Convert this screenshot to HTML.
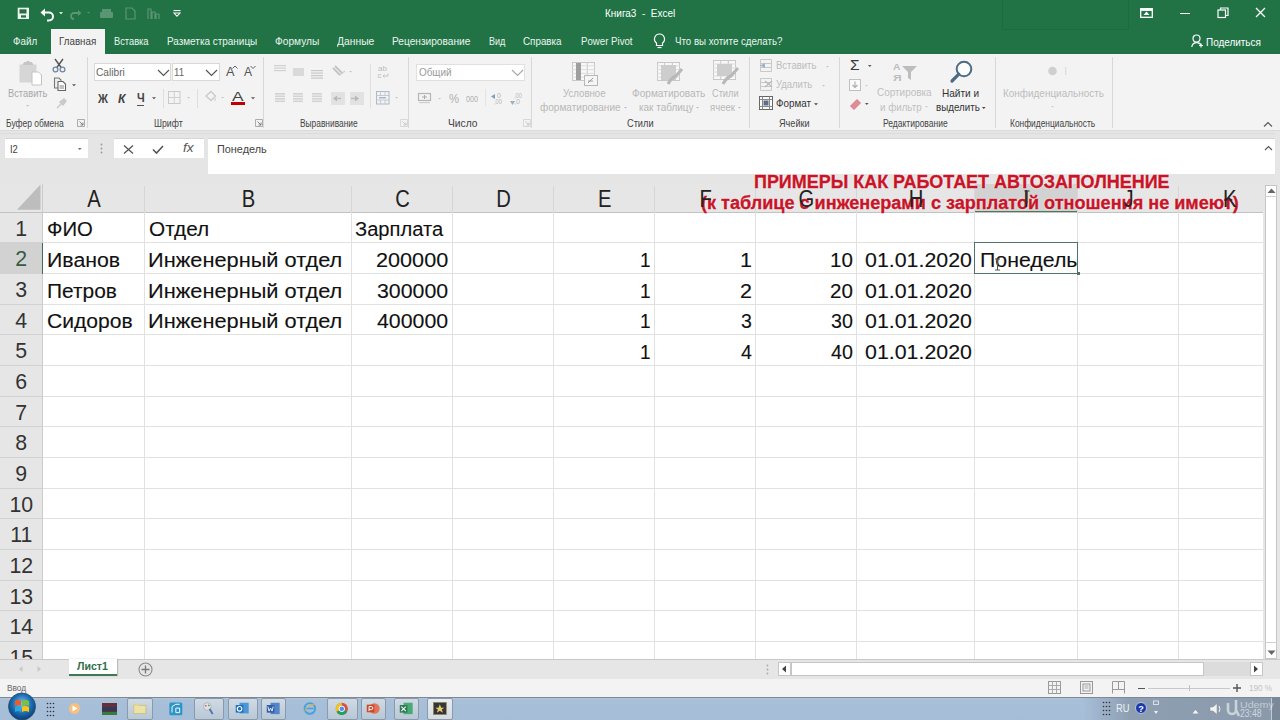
<!DOCTYPE html>
<html><head><meta charset="utf-8"><style>
html,body{margin:0;padding:0}
body{width:1280px;height:720px;overflow:hidden;position:relative;font-family:"Liberation Sans", sans-serif;background:#fff}
.t{position:absolute;white-space:nowrap;line-height:1.117;transform-origin:0 0}
svg{overflow:visible}
</style></head><body>
<div style="position:absolute;left:0.00px;top:0.00px;width:1280.00px;height:54.00px;background:#217346"></div><div style="position:absolute;left:1002.00px;top:-1.00px;width:127.00px;height:31.00px;border:1px solid #1c6a3f;box-sizing:border-box"></div><div style="position:absolute;left:51.00px;top:29.00px;width:53.50px;height:25.00px;background:#f3f3f3"></div><div class="t" style="left:13.00px;top:35.09px;font-size:11.5px;color:#eaf5ee;font-weight:normal;transform:scaleX(0.8526);">Файл</div><div class="t" style="left:59.00px;top:35.09px;font-size:11.5px;color:#444;font-weight:normal;transform:scaleX(0.8497);">Главная</div><div class="t" style="left:114.00px;top:35.09px;font-size:11.5px;color:#eaf5ee;font-weight:normal;transform:scaleX(0.8074);">Вставка</div><div class="t" style="left:167.00px;top:35.09px;font-size:11.5px;color:#eaf5ee;font-weight:normal;transform:scaleX(0.8649);">Разметка страницы</div><div class="t" style="left:275.00px;top:35.09px;font-size:11.5px;color:#eaf5ee;font-weight:normal;transform:scaleX(0.8839);">Формулы</div><div class="t" style="left:337.00px;top:35.09px;font-size:11.5px;color:#eaf5ee;font-weight:normal;transform:scaleX(0.8991);">Данные</div><div class="t" style="left:392.00px;top:35.09px;font-size:11.5px;color:#eaf5ee;font-weight:normal;transform:scaleX(0.8823);">Рецензирование</div><div class="t" style="left:489.00px;top:35.09px;font-size:11.5px;color:#eaf5ee;font-weight:normal;transform:scaleX(0.7869);">Вид</div><div class="t" style="left:523.40px;top:35.09px;font-size:11.5px;color:#eaf5ee;font-weight:normal;transform:scaleX(0.8553);">Справка</div><div class="t" style="left:580.60px;top:35.09px;font-size:11.5px;color:#eaf5ee;font-weight:normal;transform:scaleX(0.8397);">Power Pivot</div><div class="t" style="left:675.00px;top:35.09px;font-size:11.5px;color:#eaf5ee;font-weight:normal;transform:scaleX(0.8443);">Что вы хотите сделать?</div><div class="t" style="left:604.70px;top:6.77px;font-size:11.3px;color:#fff;font-weight:normal;transform:scaleX(0.8823);">Книга3&nbsp; -&nbsp; Excel</div><div class="t" style="left:1206.00px;top:36.09px;font-size:11.5px;color:#fff;font-weight:normal;transform:scaleX(0.8629);">Поделиться</div><svg style="position:absolute;left:17px;top:7px;" width="13" height="13" viewBox="0 0 13 13"><rect x="0.7" y="0.7" width="11.3" height="11.3" fill="#eaf5ee"/><rect x="2.5" y="2.3" width="7" height="4.2" fill="#2f6a47"/><rect x="4" y="8.3" width="5" height="2.3" fill="#2f6a47"/></svg><svg style="position:absolute;left:40px;top:7px;" width="16" height="14" viewBox="0 0 16 14"><path d="M2.5 5.5 H9 a4 4 0 0 1 0 8 H7" fill="none" stroke="#ffffff" stroke-width="2"/><polygon points="0.5,5.5 5,1.5 5,9.5" fill="#ffffff"/></svg><svg style="position:absolute;left:57.5px;top:11px;" width="6" height="5" viewBox="0 0 6 5"><polygon points="1,1.20 5.00,1.20 3.00,3.20" fill="#ffffff"/></svg><svg style="position:absolute;left:70px;top:8px;" width="12" height="12" viewBox="0 0 12 12"><path d="M10 5 H4 a3 3 0 0 0 0 6" fill="none" stroke="#5a9673" stroke-width="1.8"/><polygon points="11.5,5 8,2 8,8" fill="#5a9673"/></svg><svg style="position:absolute;left:86.4px;top:11.4px;" width="5.2" height="4.2" viewBox="0 0 5.2 4.2"><polygon points="1,0.96 4.20,0.96 2.60,2.56" fill="#5a9673"/></svg><svg style="position:absolute;left:100px;top:9px;" width="13" height="10" viewBox="0 0 13 10"><rect x="0" y="3" width="13" height="6" rx="1" fill="#5a9673"/><rect x="2" y="0" width="9" height="4" fill="#5a9673"/></svg><svg style="position:absolute;left:125px;top:7px;" width="11" height="13" viewBox="0 0 11 13"><path d="M1 1 H7 L10 4 V12 H1 Z" fill="none" stroke="#5a9673" stroke-width="1.2"/></svg><svg style="position:absolute;left:147px;top:7px;" width="13" height="13" viewBox="0 0 13 13"><path d="M1 12 V2 H4 V12 M5 12 V5 H8 V12 M9 12 V7 H12 V12" fill="none" stroke="#5a9673" stroke-width="1.2"/></svg><svg style="position:absolute;left:173px;top:10px;" width="8" height="7" viewBox="0 0 8 7"><rect x="0.5" y="0" width="7" height="1.1" fill="#ffffff"/><polygon points="1,3 7,3 4,6.3" fill="none" stroke="#ffffff" stroke-width="1.1"/></svg><svg style="position:absolute;left:1140px;top:8px;" width="13" height="10" viewBox="0 0 13 10"><rect x="0.7" y="0.7" width="11.6" height="8.6" fill="none" stroke="#ffffff" stroke-width="1.3"/><rect x="0.7" y="0.7" width="11.6" height="2.2" fill="#ffffff"/><polygon points="6.5,3.5 3.5,7 9.5,7" fill="#ffffff"/></svg><div style="position:absolute;left:1180.00px;top:13.00px;width:10.00px;height:1.30px;background:#ffffff"></div><svg style="position:absolute;left:1217px;top:7px;" width="12" height="12" viewBox="0 0 12 12"><rect x="1" y="3" width="7.5" height="7.5" fill="none" stroke="#ffffff" stroke-width="1.2"/><path d="M3.5 3 V1 H11 V8.5 H8.5" fill="none" stroke="#ffffff" stroke-width="1.2"/></svg><svg style="position:absolute;left:1255px;top:7px;" width="11" height="11" viewBox="0 0 11 11"><path d="M1 1 L10 10 M10 1 L1 10" stroke="#ffffff" stroke-width="1.3"/></svg><svg style="position:absolute;left:1191px;top:34px;" width="12" height="14" viewBox="0 0 12 14"><circle cx="5.5" cy="4.5" r="3.5" fill="none" stroke="#ffffff" stroke-width="1.2"/><path d="M0.8 13 a5 5 0 0 1 9.5 -1.5" fill="none" stroke="#ffffff" stroke-width="1.2"/><path d="M8 11.5 H12 M10 9.5 V13.5" stroke="#ffffff" stroke-width="1.1"/></svg><svg style="position:absolute;left:653px;top:33px;" width="13" height="16" viewBox="0 0 13 16"><path d="M6.5 1 a5 5 0 0 1 3 9 v2.5 h-6 v-2.5 a5 5 0 0 1 3 -9 z" fill="none" stroke="#ffffff" stroke-width="1.2"/><path d="M4.5 14.5 h4" stroke="#ffffff" stroke-width="1.2"/></svg><div style="position:absolute;left:0.00px;top:54.00px;width:1280.00px;height:76.00px;background:#f3f3f3"></div><div style="position:absolute;left:0.00px;top:130.00px;width:1280.00px;height:1.00px;background:#dadada"></div><div style="position:absolute;left:86.50px;top:57.00px;width:1.00px;height:71.00px;background:#d8d8d8"></div><div style="position:absolute;left:263.00px;top:57.00px;width:1.00px;height:71.00px;background:#d8d8d8"></div><div style="position:absolute;left:408.00px;top:57.00px;width:1.00px;height:71.00px;background:#d8d8d8"></div><div style="position:absolute;left:531.00px;top:57.00px;width:1.00px;height:71.00px;background:#d8d8d8"></div><div style="position:absolute;left:749.00px;top:57.00px;width:1.00px;height:71.00px;background:#d8d8d8"></div><div style="position:absolute;left:839.00px;top:57.00px;width:1.00px;height:71.00px;background:#d8d8d8"></div><div style="position:absolute;left:995.00px;top:57.00px;width:1.00px;height:71.00px;background:#d8d8d8"></div><div style="position:absolute;left:1112.00px;top:57.00px;width:1.00px;height:71.00px;background:#d8d8d8"></div><div class="t" style="left:6.00px;top:117.95px;font-size:10px;color:#444;font-weight:normal;transform:scaleX(0.8481);">Буфер обмена</div><div class="t" style="left:154.00px;top:117.95px;font-size:10px;color:#444;font-weight:normal;transform:scaleX(0.8703);">Шрифт</div><div class="t" style="left:300.00px;top:117.95px;font-size:10px;color:#444;font-weight:normal;transform:scaleX(0.8373);">Выравнивание</div><div class="t" style="left:448.00px;top:117.95px;font-size:10px;color:#444;font-weight:normal;transform:scaleX(1.0275);">Число</div><div class="t" style="left:627.00px;top:117.95px;font-size:10px;color:#444;font-weight:normal;transform:scaleX(0.9212);">Стили</div><div class="t" style="left:779.00px;top:117.95px;font-size:10px;color:#444;font-weight:normal;transform:scaleX(0.9104);">Ячейки</div><div class="t" style="left:883.00px;top:117.95px;font-size:10px;color:#444;font-weight:normal;transform:scaleX(0.8484);">Редактирование</div><div class="t" style="left:1010.00px;top:117.95px;font-size:10px;color:#444;font-weight:normal;transform:scaleX(0.8397);">Конфиденциальность</div><svg style="position:absolute;left:77px;top:119px;" width="8" height="8" viewBox="0 0 8 8"><path d="M0.5 0.5 H7.5 V7.5 H0.5 Z" fill="none" stroke="#999" stroke-width="0.8"/><path d="M2.5 2.5 L6 6 M6 3.5 V6 H3.5" fill="none" stroke="#777" stroke-width="0.9"/></svg><svg style="position:absolute;left:255px;top:119px;" width="8" height="8" viewBox="0 0 8 8"><path d="M0.5 0.5 H7.5 V7.5 H0.5 Z" fill="none" stroke="#999" stroke-width="0.8"/><path d="M2.5 2.5 L6 6 M6 3.5 V6 H3.5" fill="none" stroke="#777" stroke-width="0.9"/></svg><svg style="position:absolute;left:400px;top:119px;" width="8" height="8" viewBox="0 0 8 8"><path d="M0.5 0.5 H7.5 V7.5 H0.5 Z" fill="none" stroke="#d0d0d0" stroke-width="0.8"/><path d="M2.5 2.5 L6 6 M6 3.5 V6 H3.5" fill="none" stroke="#c4c4c4" stroke-width="0.9"/></svg><svg style="position:absolute;left:523px;top:119px;" width="8" height="8" viewBox="0 0 8 8"><path d="M0.5 0.5 H7.5 V7.5 H0.5 Z" fill="none" stroke="#d0d0d0" stroke-width="0.8"/><path d="M2.5 2.5 L6 6 M6 3.5 V6 H3.5" fill="none" stroke="#c4c4c4" stroke-width="0.9"/></svg><svg style="position:absolute;left:1263px;top:121px;" width="10" height="6" viewBox="0 0 10 6"><path d="M1 5.5 L5 1.5 L9 5.5" fill="none" stroke="#555" stroke-width="1.1"/></svg><svg style="position:absolute;left:18px;top:59px;" width="26" height="28" viewBox="0 0 26 28"><rect x="1.5" y="5.5" width="17" height="18" fill="#d6d6d6"/><path d="M4.5 6 L6 3 H8 Q10 0.5 12 3 H14 L15.5 6 Z" fill="#c6c6c6"/><path d="M14 13 H20.5 L23.5 16 V26 H14 Z" fill="#fff" stroke="#c4c4c4" stroke-width="1"/></svg><div class="t" style="left:8.30px;top:87.34px;font-size:11px;color:#a8a8a8;font-weight:normal;transform:scaleX(0.8466);">Вставить</div><svg style="position:absolute;left:25.4px;top:104.4px;" width="5.2" height="4.2" viewBox="0 0 5.2 4.2"><polygon points="1,0.96 4.20,0.96 2.60,2.56" fill="#bbb"/></svg><svg style="position:absolute;left:52px;top:58px;" width="14" height="15" viewBox="0 0 14 15"><path d="M3 1 L9.5 10 M11 1 L4.5 10" stroke="#555" stroke-width="1.4"/><circle cx="3.5" cy="11.5" r="2.4" fill="none" stroke="#6e87a5" stroke-width="1.3"/><circle cx="10.5" cy="11.5" r="2.4" fill="none" stroke="#6e87a5" stroke-width="1.3"/></svg><svg style="position:absolute;left:53px;top:77px;" width="14" height="15" viewBox="0 0 14 15"><path d="M1.5 1 H6 L8 3 V11 H1.5 Z" fill="#eee" stroke="#777" stroke-width="1.1"/><path d="M5 4.5 H10 L12.5 7 V13.5 H5 Z" fill="#fff" stroke="#666" stroke-width="1.1"/><path d="M6.5 9 H11 M6.5 11 H11" stroke="#777" stroke-width="0.9"/></svg><svg style="position:absolute;left:71px;top:83px;" width="6" height="5" viewBox="0 0 6 5"><polygon points="1,1.20 5.00,1.20 3.00,3.20" fill="#555"/></svg><svg style="position:absolute;left:55px;top:98px;" width="12" height="11" viewBox="0 0 12 11"><path d="M2 10 L6 6 M5 4 L9 1 L11 3 L8 7 Z" fill="#ccc" stroke="#c8c8c8" stroke-width="1.4"/></svg><div style="position:absolute;left:93.70px;top:63.30px;width:77.60px;height:17.90px;background:#fff;border:1px solid #d9d9d9;box-sizing:border-box"></div><div style="position:absolute;left:171.80px;top:63.30px;width:48.00px;height:17.90px;background:#fff;border:1px solid #d9d9d9;box-sizing:border-box"></div><div class="t" style="left:95.60px;top:66.34px;font-size:11px;color:#666;font-weight:normal;transform:scaleX(0.9242);">Calibri</div><div class="t" style="left:174.00px;top:66.34px;font-size:11px;color:#666;font-weight:normal;transform:scaleX(0.8849);">11</div><svg style="position:absolute;left:157px;top:69px;" width="13" height="8" viewBox="0 0 13 8"><path d="M1 1 L6.5 6.5 L12 1" fill="none" stroke="#555" stroke-width="1.2"/></svg><svg style="position:absolute;left:204.5px;top:69px;" width="13" height="8" viewBox="0 0 13 8"><path d="M1 1 L6.5 6.5 L12 1" fill="none" stroke="#555" stroke-width="1.2"/></svg><div class="t" style="left:226.00px;top:66.14px;font-size:12px;color:#555;font-weight:normal;transform:scaleX(1.0625);">A</div><svg style="position:absolute;left:232px;top:65px;" width="6" height="4" viewBox="0 0 6 4"><path d="M0.5 3.5 L3 1 L5.5 3.5" fill="none" stroke="#666" stroke-width="1"/></svg><div class="t" style="left:244.00px;top:66.14px;font-size:12px;color:#555;font-weight:normal;">A</div><svg style="position:absolute;left:250px;top:65px;" width="6" height="4" viewBox="0 0 6 4"><path d="M0.5 1 L3 3.5 L5.5 1" fill="none" stroke="#666" stroke-width="1"/></svg><div class="t" style="left:97.85px;top:91.73px;font-size:13px;color:#444;font-weight:bold;transform:scaleX(0.8462);">Ж</div><div class="t" style="left:117.60px;top:91.73px;font-size:13px;color:#444;font-weight:bold;transform:scaleX(0.9375);font-style:italic">К</div><div class="t" style="left:136.50px;top:91.64px;font-size:12px;color:#444;font-weight:bold;transform:scaleX(0.9125);">Ч</div><div style="position:absolute;left:136.50px;top:104.50px;width:7.50px;height:1.00px;background:#555"></div><svg style="position:absolute;left:150.5px;top:96px;" width="6" height="5" viewBox="0 0 6 5"><polygon points="1,1.20 5.00,1.20 3.00,3.20" fill="#555"/></svg><div style="position:absolute;left:162.60px;top:89.00px;width:1.00px;height:19.00px;background:#dedede"></div><svg style="position:absolute;left:168px;top:91px;" width="13" height="14" viewBox="0 0 13 14"><rect x="0.5" y="0.5" width="11.5" height="12" fill="none" stroke="#c9c9c9"/><path d="M6.25 0.5 V12.5 M0.5 6.5 H12" stroke="#cfcfcf"/></svg><svg style="position:absolute;left:185.9px;top:96.4px;" width="5.2" height="4.2" viewBox="0 0 5.2 4.2"><polygon points="1,0.96 4.20,0.96 2.60,2.56" fill="#c4c4c4"/></svg><div style="position:absolute;left:197.00px;top:89.00px;width:1.00px;height:19.00px;background:#dedede"></div><svg style="position:absolute;left:204px;top:90px;" width="13" height="13" viewBox="0 0 13 13"><path d="M2 6 L7 1.5 L11.5 6 L7 10.5 Z" fill="none" stroke="#c9c9c9" stroke-width="1.3"/><path d="M10 7 Q12 9 11 11" stroke="#d8d8d8" stroke-width="1.5" fill="none"/></svg><svg style="position:absolute;left:220.4px;top:96.4px;" width="5.2" height="4.2" viewBox="0 0 5.2 4.2"><polygon points="1,0.96 4.20,0.96 2.60,2.56" fill="#c4c4c4"/></svg><div class="t" style="left:232.00px;top:89.73px;font-size:13px;color:#444;font-weight:normal;transform:scaleX(1.3333);">A</div><div style="position:absolute;left:231.00px;top:102.00px;width:14.00px;height:2.80px;background:#c00000"></div><svg style="position:absolute;left:249.5px;top:96px;" width="6" height="5" viewBox="0 0 6 5"><polygon points="1,1.20 5.00,1.20 3.00,3.20" fill="#555"/></svg><svg style="position:absolute;left:274px;top:65px;" width="13" height="14" viewBox="0 0 13 14"><rect x="0" y="0" width="12" height="1.2" fill="#d0d0d0"/><rect x="0" y="2.5" width="12" height="1.2" fill="#d0d0d0"/><rect x="0" y="5" width="12" height="1.2" fill="#d0d0d0"/></svg><div style="position:absolute;left:293.00px;top:68.00px;width:11.00px;height:7.50px;background:#dadada"></div><svg style="position:absolute;left:311px;top:69px;" width="13" height="14" viewBox="0 0 13 14"><rect x="0" y="1" width="12" height="1.2" fill="#c8c8c8"/><rect x="0" y="3.5" width="12" height="1.2" fill="#c8c8c8"/><rect x="0" y="6" width="12" height="1.2" fill="#c8c8c8"/><rect x="0" y="8.5" width="12" height="1.2" fill="#c8c8c8"/></svg><svg style="position:absolute;left:331px;top:65px;" width="16" height="13" viewBox="0 0 16 13"><path d="M2 3 L9 10 M4 1 L11 8" stroke="#c4c4c4" stroke-width="1.8"/><path d="M9 10 L14 6" stroke="#cfcfcf" stroke-width="1.3"/></svg><svg style="position:absolute;left:347.9px;top:70.4px;" width="5.2" height="4.2" viewBox="0 0 5.2 4.2"><polygon points="1,0.96 4.20,0.96 2.60,2.56" fill="#c8c8c8"/></svg><div style="position:absolute;left:369.50px;top:64.00px;width:1.00px;height:44.00px;background:#e0e0e0"></div><div class="t" style="left:377.50px;top:65.26px;font-size:8px;color:#bdbdbd;font-weight:normal;transform:scaleX(1.0054);">ab</div><div class="t" style="left:377.50px;top:71.76px;font-size:8px;color:#bdbdbd;font-weight:normal;">c</div><svg style="position:absolute;left:382px;top:73px;" width="7" height="6" viewBox="0 0 7 6"><path d="M6 0.5 V3 H1 M2.5 1.5 L1 3 L2.5 4.5" fill="none" stroke="#c4c4c4" stroke-width="1"/></svg><svg style="position:absolute;left:275px;top:93px;" width="11" height="14" viewBox="0 0 11 14"><rect x="0" y="0" width="10" height="1.6" fill="#d3d3d3"/><rect x="0" y="2.5" width="10" height="1.6" fill="#d3d3d3"/><rect x="0" y="5" width="10" height="1.6" fill="#d3d3d3"/><rect x="0" y="7.5" width="10" height="1.6" fill="#d3d3d3"/></svg><svg style="position:absolute;left:293px;top:93px;" width="11" height="14" viewBox="0 0 11 14"><rect x="0" y="0" width="10" height="1.6" fill="#d3d3d3"/><rect x="0" y="2.5" width="10" height="1.6" fill="#d3d3d3"/><rect x="0" y="5" width="10" height="1.6" fill="#d3d3d3"/><rect x="0" y="7.5" width="10" height="1.6" fill="#d3d3d3"/></svg><svg style="position:absolute;left:312px;top:93px;" width="11" height="14" viewBox="0 0 11 14"><rect x="0" y="0" width="10" height="1.6" fill="#d3d3d3"/><rect x="0" y="2.5" width="10" height="1.6" fill="#d3d3d3"/><rect x="0" y="5" width="10" height="1.6" fill="#d3d3d3"/><rect x="0" y="7.5" width="10" height="1.6" fill="#d3d3d3"/></svg><svg style="position:absolute;left:331px;top:92px;" width="14" height="13" viewBox="0 0 14 13"><rect x="0" y="0" width="14" height="13" fill="#e2e2e2"/><polygon points="2,6.5 6,3.5 6,9.5" fill="#b8b8b8"/><rect x="5" y="5.8" width="5" height="1.4" fill="#bbb"/></svg><svg style="position:absolute;left:350px;top:92px;" width="14" height="13" viewBox="0 0 14 13"><rect x="0" y="0" width="14" height="13" fill="#e2e2e2"/><polygon points="9,6.5 5,3.5 5,9.5" fill="#b8b8b8"/><rect x="1" y="5.8" width="5" height="1.4" fill="#bbb"/></svg><svg style="position:absolute;left:376px;top:91px;" width="14" height="14" viewBox="0 0 14 14"><rect x="0.5" y="0.5" width="12.5" height="12.5" fill="none" stroke="#b0b8c4"/><path d="M0.5 4.5 H13 M0.5 9 H13 M4.5 0.5 V4.5 M9 0.5 V4.5 M4.5 9 V13 M9 9 V13" stroke="#c4cad2"/><path d="M3 6.8 H10" stroke="#7a9ab8" stroke-width="1"/></svg><svg style="position:absolute;left:393.9px;top:96.4px;" width="5.2" height="4.2" viewBox="0 0 5.2 4.2"><polygon points="1,0.96 4.20,0.96 2.60,2.56" fill="#c4c4c4"/></svg><div style="position:absolute;left:416.30px;top:63.60px;width:108.40px;height:17.80px;background:#fff;border:1px solid #e0e0e0;box-sizing:border-box"></div><div class="t" style="left:418.60px;top:65.84px;font-size:11px;color:#9a9a9a;font-weight:normal;transform:scaleX(0.8987);">Общий</div><svg style="position:absolute;left:511px;top:69px;" width="13" height="8" viewBox="0 0 13 8"><path d="M1 1 L6.5 6.5 L12 1" fill="none" stroke="#aaa" stroke-width="1.2"/></svg><svg style="position:absolute;left:418px;top:93px;" width="14" height="12" viewBox="0 0 14 12"><rect x="0.5" y="0.5" width="12" height="7" fill="none" stroke="#b5b5b5" stroke-width="1.2"/><path d="M4 4 H9 M6.5 2 V6" stroke="#aaa"/><rect x="1" y="9" width="11" height="1.2" fill="#d0d0d0"/></svg><svg style="position:absolute;left:436.5px;top:96.5px;" width="5.0" height="4.0" viewBox="0 0 5.0 4.0"><polygon points="1,0.90 4.00,0.90 2.50,2.40" fill="#c8c8c8"/></svg><div class="t" style="left:448.60px;top:92.64px;font-size:12px;color:#b0b0b0;font-weight:normal;transform:scaleX(0.9455);">%</div><div class="t" style="left:466.00px;top:93.86px;font-size:9px;color:#b0b0b0;font-weight:normal;transform:scaleX(0.7994);">000</div><div style="position:absolute;left:485.00px;top:89.00px;width:1.00px;height:17.00px;background:#e4e4e4"></div><div class="t" style="left:497.00px;top:91.67px;font-size:7px;color:#b5b5b5;font-weight:normal;">0</div><div class="t" style="left:494.00px;top:97.67px;font-size:7px;color:#b5b5b5;font-weight:normal;transform:scaleX(0.8132);">,00</div><svg style="position:absolute;left:491px;top:94px;" width="6" height="5" viewBox="0 0 6 5"><polygon points="0,2.5 4,0 4,5" fill="#7aa0c0"/></svg><div class="t" style="left:514.00px;top:91.67px;font-size:7px;color:#b5b5b5;font-weight:normal;transform:scaleX(0.8132);">,00</div><div class="t" style="left:514.00px;top:97.67px;font-size:7px;color:#b5b5b5;font-weight:normal;transform:scaleX(1.0093);">,0</div><svg style="position:absolute;left:510px;top:100px;" width="5" height="5" viewBox="0 0 5 5"><polygon points="2.5,5 0,1 5,1" fill="#9ab0c4"/></svg><svg style="position:absolute;left:572px;top:62px;" width="26" height="24" viewBox="0 0 26 24"><rect x="0.5" y="0.5" width="22" height="18" fill="#f8f8f8" stroke="#c8c8c8"/><path d="M7.7 0 V19" stroke="#c8c8c8"/><path d="M15.3 0 V19" stroke="#c8c8c8"/><path d="M0 3.8 H23" stroke="#dcdcdc"/><path d="M0 7.6 H23" stroke="#dcdcdc"/><path d="M0 11.4 H23" stroke="#dcdcdc"/><path d="M0 15.2 H23" stroke="#dcdcdc"/><rect x="4" y="1" width="5" height="17" fill="#9e9e9e"/><rect x="12.5" y="13.5" width="13" height="10" fill="#f5f5f5" stroke="#b8b8b8"/><path d="M16 21 L21 16 M16 19 H21" stroke="#999" stroke-width="0.9"/></svg><svg style="position:absolute;left:657px;top:62px;" width="27" height="24" viewBox="0 0 27 24"><rect x="0.5" y="0.5" width="22" height="18" fill="#f8f8f8" stroke="#c8c8c8"/><path d="M7.7 0 V19" stroke="#c8c8c8"/><path d="M15.3 0 V19" stroke="#c8c8c8"/><path d="M0 3.8 H23" stroke="#dcdcdc"/><path d="M0 7.6 H23" stroke="#dcdcdc"/><path d="M0 11.4 H23" stroke="#dcdcdc"/><path d="M0 15.2 H23" stroke="#dcdcdc"/><rect x="4" y="3" width="15" height="15" fill="#cdcdcd"/><path d="M11 22 Q14 16 19 14 L25 7" stroke="#b8b8b8" stroke-width="3" fill="none"/></svg><svg style="position:absolute;left:713px;top:60px;" width="27" height="26" viewBox="0 0 27 26"><rect x="0.5" y="0.5" width="22" height="19" fill="#f8f8f8" stroke="#c8c8c8"/><path d="M7.7 0 V20" stroke="#c8c8c8"/><path d="M15.3 0 V20" stroke="#c8c8c8"/><path d="M0 4.0 H23" stroke="#dcdcdc"/><path d="M0 8.0 H23" stroke="#dcdcdc"/><path d="M0 12.0 H23" stroke="#dcdcdc"/><path d="M0 16.0 H23" stroke="#dcdcdc"/><rect x="4" y="4" width="15" height="12" fill="#cdcdcd"/><path d="M10 24 Q13 18 18 16 L25 8" stroke="#b8b8b8" stroke-width="3" fill="none"/></svg><div class="t" style="left:563.00px;top:88.15px;font-size:10px;color:#b8b8b8;font-weight:normal;transform:scaleX(0.9644);">Условное</div><div class="t" style="left:540.00px;top:101.85px;font-size:10px;color:#b8b8b8;font-weight:normal;transform:scaleX(1.0034);">форматирование</div><svg style="position:absolute;left:623.0px;top:106.0px;" width="5.0" height="4.0" viewBox="0 0 5.0 4.0"><polygon points="1,0.90 4.00,0.90 2.50,2.40" fill="#b8b8b8"/></svg><div class="t" style="left:631.50px;top:88.15px;font-size:10px;color:#b8b8b8;font-weight:normal;transform:scaleX(1.0103);">Форматировать</div><div class="t" style="left:638.50px;top:101.85px;font-size:10px;color:#b8b8b8;font-weight:normal;transform:scaleX(0.9951);">как таблицу</div><svg style="position:absolute;left:694.5px;top:106.0px;" width="5.0" height="4.0" viewBox="0 0 5.0 4.0"><polygon points="1,0.90 4.00,0.90 2.50,2.40" fill="#b8b8b8"/></svg><div class="t" style="left:711.50px;top:88.15px;font-size:10px;color:#b8b8b8;font-weight:normal;transform:scaleX(0.9212);">Стили</div><div class="t" style="left:709.80px;top:101.85px;font-size:10px;color:#b8b8b8;font-weight:normal;transform:scaleX(0.9533);">ячеек</div><svg style="position:absolute;left:736.5px;top:106.0px;" width="5.0" height="4.0" viewBox="0 0 5.0 4.0"><polygon points="1,0.90 4.00,0.90 2.50,2.40" fill="#b8b8b8"/></svg><svg style="position:absolute;left:760px;top:59px;" width="13" height="14" viewBox="0 0 13 14"><path d="M0.5 0.5 H11.5 M0.5 4.5 H11.5 M0.5 8.5 H11.5 M0.5 12.5 H11.5 M0.5 0.5 V12.5 M11.5 0.5 V12.5" stroke="#c8c8c8" fill="none"/></svg><svg style="position:absolute;left:760px;top:63px;" width="8" height="5" viewBox="0 0 8 5"><polygon points="0,2.5 5,0 5,5" fill="#9ab4cc"/></svg><div class="t" style="left:775.80px;top:60.35px;font-size:10px;color:#bdbdbd;font-weight:normal;transform:scaleX(0.9531);">Вставить</div><svg style="position:absolute;left:824.5px;top:64.5px;" width="5.0" height="4.0" viewBox="0 0 5.0 4.0"><polygon points="1,0.90 4.00,0.90 2.50,2.40" fill="#c4c4c4"/></svg><svg style="position:absolute;left:760px;top:78px;" width="13" height="14" viewBox="0 0 13 14"><path d="M0.5 0.5 H11.5 M0.5 4.5 H11.5 M0.5 8.5 H11.5 M0.5 12.5 H11.5 M0.5 0.5 V12.5 M11.5 0.5 V12.5" stroke="#c8c8c8" fill="none"/></svg><svg style="position:absolute;left:764px;top:80px;" width="9" height="8" viewBox="0 0 9 8"><path d="M1 1 L8 7 M8 1 L1 7" stroke="#bbb" stroke-width="1.3"/></svg><div class="t" style="left:776.00px;top:78.95px;font-size:10px;color:#bdbdbd;font-weight:normal;transform:scaleX(0.9481);">Удалить</div><svg style="position:absolute;left:820.5px;top:83.5px;" width="5.0" height="4.0" viewBox="0 0 5.0 4.0"><polygon points="1,0.90 4.00,0.90 2.50,2.40" fill="#c4c4c4"/></svg><svg style="position:absolute;left:759px;top:96px;" width="15" height="15" viewBox="0 0 15 15"><rect x="0.5" y="0.5" width="13" height="13" fill="#fafafa" stroke="#666"/><path d="M0.5 3.5 H13.5 M3.5 0.5 V13.5 M10.5 0.5 V13.5 M0.5 10.5 H13.5" stroke="#888"/><rect x="4.5" y="4.5" width="5" height="5" fill="#5a6f88"/></svg><div class="t" style="left:775.60px;top:97.34px;font-size:11px;color:#333;font-weight:normal;transform:scaleX(0.8940);">Формат</div><svg style="position:absolute;left:813px;top:102px;" width="6" height="5" viewBox="0 0 6 5"><polygon points="1,1.20 5.00,1.20 3.00,3.20" fill="#444"/></svg><div class="t" style="left:850.00px;top:58.33px;font-size:14px;color:#3a3a3a;font-weight:normal;transform:scaleX(1.1111);">Σ</div><svg style="position:absolute;left:867.2px;top:64.2px;" width="5.6" height="4.6" viewBox="0 0 5.6 4.6"><polygon points="1,1.08 4.60,1.08 2.80,2.88" fill="#555"/></svg><svg style="position:absolute;left:849px;top:79px;" width="12" height="12" viewBox="0 0 12 12"><rect x="0.5" y="0.5" width="11" height="11" fill="#fafafa" stroke="#c0c0c0"/><path d="M6 2.5 V8.5 M3.5 6 L6 8.5 L8.5 6" fill="none" stroke="#aaa" stroke-width="1.1"/></svg><svg style="position:absolute;left:863.5px;top:83.5px;" width="5.0" height="4.0" viewBox="0 0 5.0 4.0"><polygon points="1,0.90 4.00,0.90 2.50,2.40" fill="#ccc"/></svg><svg style="position:absolute;left:849px;top:98px;" width="13" height="12" viewBox="0 0 13 12"><path d="M1.5 8 L8 1.5 L11.5 5 L5 11.5 Z" fill="#e38a9a" stroke="#d87080" stroke-width="0.8"/></svg><svg style="position:absolute;left:864.2px;top:102.2px;" width="5.6" height="4.6" viewBox="0 0 5.6 4.6"><polygon points="1,1.08 4.60,1.08 2.80,2.88" fill="#555"/></svg><div class="t" style="left:893.00px;top:62.36px;font-size:9px;color:#bcbcbc;font-weight:bold;transform:scaleX(1.1429);">A</div><div class="t" style="left:893.00px;top:72.86px;font-size:9px;color:#bcbcbc;font-weight:bold;transform:scaleX(1.3333);">Я</div><svg style="position:absolute;left:901px;top:65px;" width="17" height="16" viewBox="0 0 17 16"><polygon points="1,1 16,1 10,7 10,15 7,13 7,7" fill="#bdbdbd"/></svg><div class="t" style="left:876.50px;top:87.45px;font-size:10px;color:#c0c0c0;font-weight:normal;transform:scaleX(0.9960);">Сортировка</div><div class="t" style="left:880.00px;top:101.55px;font-size:10px;color:#c0c0c0;font-weight:normal;transform:scaleX(0.9763);">и фильтр</div><svg style="position:absolute;left:923.5px;top:104.5px;" width="5.0" height="4.0" viewBox="0 0 5.0 4.0"><polygon points="1,0.90 4.00,0.90 2.50,2.40" fill="#c8c8c8"/></svg><svg style="position:absolute;left:949px;top:59px;" width="25" height="25" viewBox="0 0 25 25"><circle cx="15" cy="10" r="7.3" fill="#fbfdff" stroke="#4d6a86" stroke-width="2"/><path d="M9.8 15.2 L3 22" stroke="#4d6a86" stroke-width="3.2" stroke-linecap="round"/></svg><div class="t" style="left:942.00px;top:87.05px;font-size:11px;color:#333;font-weight:normal;transform:scaleX(0.9148);">Найти и</div><div class="t" style="left:936.00px;top:101.05px;font-size:11px;color:#333;font-weight:normal;transform:scaleX(0.8885);">выделить</div><svg style="position:absolute;left:981.2px;top:106.2px;" width="5.6" height="4.6" viewBox="0 0 5.6 4.6"><polygon points="1,1.08 4.60,1.08 2.80,2.88" fill="#444"/></svg><svg style="position:absolute;left:1046px;top:65px;" width="24" height="12" viewBox="0 0 24 12"><circle cx="6.5" cy="6" r="4.3" fill="#cfcfcf"/><rect x="19" y="2" width="1.3" height="8" fill="#ddd"/></svg><div class="t" style="left:1003.00px;top:88.25px;font-size:10px;color:#bdbdbd;font-weight:normal;transform:scaleX(0.9948);">Конфиденциальность</div><svg style="position:absolute;left:1049.5px;top:104.5px;" width="5.0" height="4.0" viewBox="0 0 5.0 4.0"><polygon points="1,0.90 4.00,0.90 2.50,2.40" fill="#ccc"/></svg><div style="position:absolute;left:0.00px;top:131.00px;width:1280.00px;height:53.00px;background:#e5e5e5"></div><div style="position:absolute;left:0.00px;top:133.40px;width:1280.00px;height:0.80px;background:#dcdcdc"></div><div style="position:absolute;left:4.80px;top:138.40px;width:83.40px;height:19.60px;background:#fff;border-top:1px solid #d6d6d6;box-sizing:border-box"></div><div class="t" style="left:9.60px;top:143.50px;font-size:10.5px;color:#444;font-weight:normal;transform:scaleX(0.8971);">I2</div><svg style="position:absolute;left:77.2px;top:146.7px;" width="5.6" height="4.6" viewBox="0 0 5.6 4.6"><polygon points="1,1.08 4.60,1.08 2.80,2.88" fill="#666"/></svg><svg style="position:absolute;left:100px;top:143px;" width="3" height="11" viewBox="0 0 3 11"><circle cx="1.5" cy="1.5" r="0.9" fill="#999"/><circle cx="1.5" cy="5.5" r="0.9" fill="#999"/><circle cx="1.5" cy="9.5" r="0.9" fill="#999"/></svg><div style="position:absolute;left:113.50px;top:138.40px;width:90.50px;height:19.60px;background:#fff;border-top:1px solid #d6d6d6;box-sizing:border-box"></div><svg style="position:absolute;left:123px;top:144.5px;" width="11" height="9" viewBox="0 0 11 9"><path d="M1 0.5 L10 8.5 M10 0.5 L1 8.5" stroke="#555" stroke-width="1.3"/></svg><svg style="position:absolute;left:152px;top:144.5px;" width="12" height="9" viewBox="0 0 12 9"><path d="M1 4.5 L4.5 8 L11 1" fill="none" stroke="#555" stroke-width="1.6"/></svg><div class="t" style="left:183.00px;top:142.14px;font-size:12px;color:#555;font-weight:normal;transform:scaleX(1.1356);font-style:italic;font-family:"Liberation Serif",serif">fx</div><div style="position:absolute;left:207.50px;top:138.40px;width:1067.50px;height:36.00px;background:#fff;border-top:1px solid #d6d6d6;box-sizing:border-box"></div><div class="t" style="left:216.50px;top:142.79px;font-size:11px;color:#444;font-weight:normal;transform:scaleX(0.9888);">Понедель</div><div style="position:absolute;left:0.00px;top:184.00px;width:1263.30px;height:475.00px;background:#fff"></div><div style="position:absolute;left:0.00px;top:184.00px;width:1263.30px;height:28.30px;background:#e6e6e6"></div><div style="position:absolute;left:0.00px;top:212.30px;width:42.60px;height:446.70px;background:#e6e6e6"></div><div style="position:absolute;left:975.30px;top:184.00px;width:102.20px;height:28.30px;background:#d2d2d2"></div><div style="position:absolute;left:975.30px;top:210.70px;width:102.20px;height:1.60px;background:#4a7a5c"></div><div style="position:absolute;left:0.00px;top:242.95px;width:42.60px;height:30.65px;background:#d2d2d2"></div><div style="position:absolute;left:0.00px;top:211.70px;width:1263.30px;height:1.10px;background:#c2c2c2"></div><div style="position:absolute;left:41.60px;top:184.00px;width:1.00px;height:475.00px;background:#cccccc"></div><div style="position:absolute;left:143.50px;top:186.00px;width:1.00px;height:26.30px;background:#d6d6d6"></div><div style="position:absolute;left:143.50px;top:212.30px;width:1.00px;height:446.70px;background:#e1e1e1"></div><div style="position:absolute;left:350.50px;top:186.00px;width:1.00px;height:26.30px;background:#d6d6d6"></div><div style="position:absolute;left:350.50px;top:212.30px;width:1.00px;height:446.70px;background:#e1e1e1"></div><div style="position:absolute;left:451.50px;top:186.00px;width:1.00px;height:26.30px;background:#d6d6d6"></div><div style="position:absolute;left:451.50px;top:212.30px;width:1.00px;height:446.70px;background:#e1e1e1"></div><div style="position:absolute;left:552.50px;top:186.00px;width:1.00px;height:26.30px;background:#d6d6d6"></div><div style="position:absolute;left:552.50px;top:212.30px;width:1.00px;height:446.70px;background:#e1e1e1"></div><div style="position:absolute;left:654.20px;top:186.00px;width:1.00px;height:26.30px;background:#d6d6d6"></div><div style="position:absolute;left:654.20px;top:212.30px;width:1.00px;height:446.70px;background:#e1e1e1"></div><div style="position:absolute;left:755.40px;top:186.00px;width:1.00px;height:26.30px;background:#d6d6d6"></div><div style="position:absolute;left:755.40px;top:212.30px;width:1.00px;height:446.70px;background:#e1e1e1"></div><div style="position:absolute;left:856.20px;top:186.00px;width:1.00px;height:26.30px;background:#d6d6d6"></div><div style="position:absolute;left:856.20px;top:212.30px;width:1.00px;height:446.70px;background:#e1e1e1"></div><div style="position:absolute;left:974.30px;top:186.00px;width:1.00px;height:26.30px;background:#d6d6d6"></div><div style="position:absolute;left:974.30px;top:212.30px;width:1.00px;height:446.70px;background:#e1e1e1"></div><div style="position:absolute;left:1076.50px;top:186.00px;width:1.00px;height:26.30px;background:#d6d6d6"></div><div style="position:absolute;left:1076.50px;top:212.30px;width:1.00px;height:446.70px;background:#e1e1e1"></div><div style="position:absolute;left:1177.80px;top:186.00px;width:1.00px;height:26.30px;background:#d6d6d6"></div><div style="position:absolute;left:1177.80px;top:212.30px;width:1.00px;height:446.70px;background:#e1e1e1"></div><div style="position:absolute;left:0.00px;top:242.45px;width:41.60px;height:1.00px;background:#d2d2d2"></div><div style="position:absolute;left:42.60px;top:242.45px;width:1220.70px;height:1.00px;background:#e1e1e1"></div><div style="position:absolute;left:0.00px;top:273.10px;width:41.60px;height:1.00px;background:#d2d2d2"></div><div style="position:absolute;left:42.60px;top:273.10px;width:1220.70px;height:1.00px;background:#e1e1e1"></div><div style="position:absolute;left:0.00px;top:303.75px;width:41.60px;height:1.00px;background:#d2d2d2"></div><div style="position:absolute;left:42.60px;top:303.75px;width:1220.70px;height:1.00px;background:#e1e1e1"></div><div style="position:absolute;left:0.00px;top:334.40px;width:41.60px;height:1.00px;background:#d2d2d2"></div><div style="position:absolute;left:42.60px;top:334.40px;width:1220.70px;height:1.00px;background:#e1e1e1"></div><div style="position:absolute;left:0.00px;top:365.05px;width:41.60px;height:1.00px;background:#d2d2d2"></div><div style="position:absolute;left:42.60px;top:365.05px;width:1220.70px;height:1.00px;background:#e1e1e1"></div><div style="position:absolute;left:0.00px;top:395.70px;width:41.60px;height:1.00px;background:#d2d2d2"></div><div style="position:absolute;left:42.60px;top:395.70px;width:1220.70px;height:1.00px;background:#e1e1e1"></div><div style="position:absolute;left:0.00px;top:426.35px;width:41.60px;height:1.00px;background:#d2d2d2"></div><div style="position:absolute;left:42.60px;top:426.35px;width:1220.70px;height:1.00px;background:#e1e1e1"></div><div style="position:absolute;left:0.00px;top:457.00px;width:41.60px;height:1.00px;background:#d2d2d2"></div><div style="position:absolute;left:42.60px;top:457.00px;width:1220.70px;height:1.00px;background:#e1e1e1"></div><div style="position:absolute;left:0.00px;top:487.65px;width:41.60px;height:1.00px;background:#d2d2d2"></div><div style="position:absolute;left:42.60px;top:487.65px;width:1220.70px;height:1.00px;background:#e1e1e1"></div><div style="position:absolute;left:0.00px;top:518.30px;width:41.60px;height:1.00px;background:#d2d2d2"></div><div style="position:absolute;left:42.60px;top:518.30px;width:1220.70px;height:1.00px;background:#e1e1e1"></div><div style="position:absolute;left:0.00px;top:548.95px;width:41.60px;height:1.00px;background:#d2d2d2"></div><div style="position:absolute;left:42.60px;top:548.95px;width:1220.70px;height:1.00px;background:#e1e1e1"></div><div style="position:absolute;left:0.00px;top:579.60px;width:41.60px;height:1.00px;background:#d2d2d2"></div><div style="position:absolute;left:42.60px;top:579.60px;width:1220.70px;height:1.00px;background:#e1e1e1"></div><div style="position:absolute;left:0.00px;top:610.25px;width:41.60px;height:1.00px;background:#d2d2d2"></div><div style="position:absolute;left:42.60px;top:610.25px;width:1220.70px;height:1.00px;background:#e1e1e1"></div><div style="position:absolute;left:0.00px;top:640.90px;width:41.60px;height:1.00px;background:#d2d2d2"></div><div style="position:absolute;left:42.60px;top:640.90px;width:1220.70px;height:1.00px;background:#e1e1e1"></div><div style="position:absolute;left:41.70px;top:242.95px;width:1.50px;height:30.65px;background:#3f6e52"></div><svg style="position:absolute;left:17px;top:184px;" width="24" height="26" viewBox="0 0 24 26"><polygon points="23.5,0.6 23.5,25.8 0,25.8" fill="#bdbdbd"/></svg><div class="t" style="left:46.73px;top:218.35px;font-size:20px;color:#111;font-weight:normal;transform:scaleX(1.0154);-webkit-text-stroke:0.12px #111">ФИО</div><div class="t" style="left:148.50px;top:218.35px;font-size:20px;color:#111;font-weight:normal;transform:scaleX(1.0405);-webkit-text-stroke:0.12px #111">Отдел</div><div class="t" style="left:355.00px;top:218.35px;font-size:20px;color:#111;font-weight:normal;transform:scaleX(1.0063);-webkit-text-stroke:0.12px #111">Зарплата</div><div class="t" style="left:46.94px;top:249.00px;font-size:20px;color:#111;font-weight:normal;transform:scaleX(1.0646);-webkit-text-stroke:0.12px #111">Иванов</div><div class="t" style="left:147.66px;top:249.00px;font-size:20px;color:#111;font-weight:normal;transform:scaleX(1.0896);-webkit-text-stroke:0.12px #111">Инженерный отдел</div><div class="t" style="left:375.92px;top:249.00px;font-size:20px;color:#111;font-weight:normal;transform:scaleX(1.0821);-webkit-text-stroke:0.12px #111">200000</div><div class="t" style="left:46.95px;top:279.65px;font-size:20px;color:#111;font-weight:normal;transform:scaleX(1.0461);-webkit-text-stroke:0.12px #111">Петров</div><div class="t" style="left:147.66px;top:279.65px;font-size:20px;color:#111;font-weight:normal;transform:scaleX(1.0896);-webkit-text-stroke:0.12px #111">Инженерный отдел</div><div class="t" style="left:377.00px;top:279.65px;font-size:20px;color:#111;font-weight:normal;transform:scaleX(1.0658);-webkit-text-stroke:0.12px #111">300000</div><div class="t" style="left:46.95px;top:310.30px;font-size:20px;color:#111;font-weight:normal;transform:scaleX(1.0546);-webkit-text-stroke:0.12px #111">Сидоров</div><div class="t" style="left:147.66px;top:310.30px;font-size:20px;color:#111;font-weight:normal;transform:scaleX(1.0896);-webkit-text-stroke:0.12px #111">Инженерный отдел</div><div class="t" style="left:377.00px;top:310.30px;font-size:20px;color:#111;font-weight:normal;transform:scaleX(1.0658);-webkit-text-stroke:0.12px #111">400000</div><div class="t" style="left:639.55px;top:249.00px;font-size:20px;color:#111;font-weight:normal;transform:scaleX(0.9500);-webkit-text-stroke:0.12px #111">1</div><div class="t" style="left:740.17px;top:249.00px;font-size:20px;color:#111;font-weight:normal;transform:scaleX(1.0750);-webkit-text-stroke:0.12px #111">1</div><div class="t" style="left:830.22px;top:249.00px;font-size:20px;color:#111;font-weight:normal;transform:scaleX(1.0297);-webkit-text-stroke:0.12px #111">10</div><div class="t" style="left:864.50px;top:249.00px;font-size:20px;color:#111;font-weight:normal;transform:scaleX(1.0678);-webkit-text-stroke:0.12px #111">01.01.2020</div><div class="t" style="left:639.55px;top:279.65px;font-size:20px;color:#111;font-weight:normal;transform:scaleX(0.9500);-webkit-text-stroke:0.12px #111">1</div><div class="t" style="left:740.17px;top:279.65px;font-size:20px;color:#111;font-weight:normal;transform:scaleX(1.0750);-webkit-text-stroke:0.12px #111">2</div><div class="t" style="left:830.22px;top:279.65px;font-size:20px;color:#111;font-weight:normal;transform:scaleX(1.0297);-webkit-text-stroke:0.12px #111">20</div><div class="t" style="left:864.50px;top:279.65px;font-size:20px;color:#111;font-weight:normal;transform:scaleX(1.0678);-webkit-text-stroke:0.12px #111">01.01.2020</div><div class="t" style="left:639.55px;top:310.30px;font-size:20px;color:#111;font-weight:normal;transform:scaleX(0.9500);-webkit-text-stroke:0.12px #111">1</div><div class="t" style="left:741.25px;top:310.30px;font-size:20px;color:#111;font-weight:normal;transform:scaleX(0.9773);-webkit-text-stroke:0.12px #111">3</div><div class="t" style="left:831.25px;top:310.30px;font-size:20px;color:#111;font-weight:normal;transform:scaleX(0.9831);-webkit-text-stroke:0.12px #111">30</div><div class="t" style="left:864.50px;top:310.30px;font-size:20px;color:#111;font-weight:normal;transform:scaleX(1.0678);-webkit-text-stroke:0.12px #111">01.01.2020</div><div class="t" style="left:639.55px;top:340.95px;font-size:20px;color:#111;font-weight:normal;transform:scaleX(0.9500);-webkit-text-stroke:0.12px #111">1</div><div class="t" style="left:741.25px;top:340.95px;font-size:20px;color:#111;font-weight:normal;transform:scaleX(0.9773);-webkit-text-stroke:0.12px #111">4</div><div class="t" style="left:831.25px;top:340.95px;font-size:20px;color:#111;font-weight:normal;transform:scaleX(0.9831);-webkit-text-stroke:0.12px #111">40</div><div class="t" style="left:864.50px;top:340.95px;font-size:20px;color:#111;font-weight:normal;transform:scaleX(1.0678);-webkit-text-stroke:0.12px #111">01.01.2020</div><div class="t" style="left:979.73px;top:249.00px;font-size:20px;color:#111;font-weight:normal;transform:scaleX(1.0653);-webkit-text-stroke:0.12px #111">Понедель</div><div style="position:absolute;left:974.30px;top:241.65px;width:103.70px;height:32.45px;border:1.8px solid #4f7562;box-sizing:border-box"></div><div style="position:absolute;left:1076.50px;top:272.10px;width:3.00px;height:3.00px;background:#4f7562"></div><svg style="position:absolute;left:994px;top:258px;" width="7" height="14" viewBox="0 0 7 14"><path d="M1 1 H6 M3.5 1 V12 M1 12 H6" stroke="#555" stroke-width="1"/></svg><div class="t" style="left:753.50px;top:171.71px;font-size:18px;color:#c91428;font-weight:bold;transform:scaleX(0.9972);-webkit-text-stroke:0.35px #c91428;text-shadow:0 0 2px #fff,0 0 1px #fff">ПРИМЕРЫ КАК РАБОТАЕТ АВТОЗАПОЛНЕНИЕ</div><div class="t" style="left:701.00px;top:193.21px;font-size:18px;color:#c91428;font-weight:bold;transform:scaleX(1.0046);-webkit-text-stroke:0.35px #c91428;text-shadow:0 0 2px #fff,0 0 1px #fff">(к таблице с инженерами с зарплатой отношения не имеют)</div><div class="t" style="left:42.60px;width:101.90px;top:186.43px;font-size:23.5px;color:#222;text-align:center;transform:scaleX(0.86);transform-origin:50% 0">A</div><div class="t" style="left:144.50px;width:207.00px;top:186.43px;font-size:23.5px;color:#222;text-align:center;transform:scaleX(0.86);transform-origin:50% 0">B</div><div class="t" style="left:351.50px;width:101.00px;top:186.43px;font-size:23.5px;color:#222;text-align:center;transform:scaleX(0.86);transform-origin:50% 0">C</div><div class="t" style="left:452.50px;width:101.00px;top:186.43px;font-size:23.5px;color:#222;text-align:center;transform:scaleX(0.86);transform-origin:50% 0">D</div><div class="t" style="left:553.50px;width:101.70px;top:186.43px;font-size:23.5px;color:#222;text-align:center;transform:scaleX(0.86);transform-origin:50% 0">E</div><div class="t" style="left:655.20px;width:101.20px;top:186.43px;font-size:23.5px;color:#222;text-align:center;transform:scaleX(0.86);transform-origin:50% 0">F</div><div class="t" style="left:756.40px;width:100.80px;top:186.43px;font-size:23.5px;color:#222;text-align:center;transform:scaleX(0.86);transform-origin:50% 0">G</div><div class="t" style="left:857.20px;width:118.10px;top:186.43px;font-size:23.5px;color:#222;text-align:center;transform:scaleX(0.86);transform-origin:50% 0">H</div><div class="t" style="left:975.30px;width:102.20px;top:186.43px;font-size:23.5px;color:#222;text-align:center;transform:scaleX(0.86);transform-origin:50% 0">I</div><div class="t" style="left:1077.50px;width:101.30px;top:186.43px;font-size:23.5px;color:#222;text-align:center;transform:scaleX(0.86);transform-origin:50% 0">J</div><div class="t" style="left:1178.80px;width:101.30px;top:186.43px;font-size:23.5px;color:#222;text-align:center;transform:scaleX(0.86);transform-origin:50% 0">K</div><div class="t" style="left:0px;width:42.60px;top:217.77px;font-size:21.3px;color:#333;text-align:center">1</div><div class="t" style="left:0px;width:42.60px;top:248.42px;font-size:21.3px;color:#325d43;text-align:center">2</div><div class="t" style="left:0px;width:42.60px;top:279.07px;font-size:21.3px;color:#333;text-align:center">3</div><div class="t" style="left:0px;width:42.60px;top:309.72px;font-size:21.3px;color:#333;text-align:center">4</div><div class="t" style="left:0px;width:42.60px;top:340.37px;font-size:21.3px;color:#333;text-align:center">5</div><div class="t" style="left:0px;width:42.60px;top:371.02px;font-size:21.3px;color:#333;text-align:center">6</div><div class="t" style="left:0px;width:42.60px;top:401.67px;font-size:21.3px;color:#333;text-align:center">7</div><div class="t" style="left:0px;width:42.60px;top:432.32px;font-size:21.3px;color:#333;text-align:center">8</div><div class="t" style="left:0px;width:42.60px;top:462.97px;font-size:21.3px;color:#333;text-align:center">9</div><div class="t" style="left:0px;width:42.60px;top:493.62px;font-size:21.3px;color:#333;text-align:center">10</div><div class="t" style="left:0px;width:42.60px;top:524.27px;font-size:21.3px;color:#333;text-align:center">11</div><div class="t" style="left:0px;width:42.60px;top:554.92px;font-size:21.3px;color:#333;text-align:center">12</div><div class="t" style="left:0px;width:42.60px;top:585.57px;font-size:21.3px;color:#333;text-align:center">13</div><div class="t" style="left:0px;width:42.60px;top:616.22px;font-size:21.3px;color:#333;text-align:center">14</div><div class="t" style="left:0px;width:42.60px;top:646.87px;font-size:21.3px;color:#333;text-align:center">15</div><svg style="position:absolute;left:1024px;top:190px;" width="6" height="14" viewBox="0 0 6 14"><path d="M0.5 1 H5.5 M3 1 V13" stroke="#333" stroke-width="1.2"/></svg><div style="position:absolute;left:1263.30px;top:184.00px;width:16.70px;height:475.00px;background:#e6e6e6"></div><div style="position:absolute;left:1265.30px;top:184.70px;width:12.20px;height:474.30px;background:#fff;border:1px solid #c6c6c6;box-sizing:border-box"></div><div style="position:absolute;left:1265.30px;top:196.30px;width:12.20px;height:1.00px;background:#d0d0d0"></div><div style="position:absolute;left:1265.30px;top:642.00px;width:12.20px;height:1.00px;background:#d0d0d0"></div><svg style="position:absolute;left:1267px;top:188px;" width="9" height="6" viewBox="0 0 9 6"><polygon points="4.5,0.5 8.5,5 0.5,5" fill="#666"/></svg><svg style="position:absolute;left:1267px;top:650px;" width="9" height="6" viewBox="0 0 9 6"><polygon points="0.5,0.5 8.5,0.5 4.5,5" fill="#666"/></svg><svg style="position:absolute;left:1264px;top:145px;" width="9" height="6" viewBox="0 0 9 6"><path d="M1 5 L4.5 1.5 L8 5" fill="none" stroke="#555" stroke-width="1.1"/></svg><div style="position:absolute;left:1275.00px;top:131.50px;width:5.00px;height:52.50px;background:#e6e6e6"></div><div style="position:absolute;left:0.00px;top:659.00px;width:1280.00px;height:20.00px;background:#e6e6e6"></div><div style="position:absolute;left:0.00px;top:659.00px;width:1280.00px;height:1.00px;background:#c8c8c8"></div><svg style="position:absolute;left:19px;top:666px;" width="4" height="7" viewBox="0 0 4 7"><polygon points="3.5,0 3.5,6 0,3" fill="#c8c8c8"/></svg><svg style="position:absolute;left:37px;top:666px;" width="4" height="7" viewBox="0 0 4 7"><polygon points="0.5,0 0.5,6 4,3" fill="#c8c8c8"/></svg><div style="position:absolute;left:68.80px;top:659.00px;width:48.10px;height:17.00px;background:#fff;box-shadow:1px 0 1px #bbb"></div><div style="position:absolute;left:68.80px;top:674.00px;width:48.10px;height:2.00px;background:#3e7a55"></div><div class="t" style="left:77.00px;top:660.19px;font-size:11.5px;color:#2f6f48;font-weight:bold;transform:scaleX(0.9220);">Лист1</div><svg style="position:absolute;left:138px;top:662px;" width="15" height="15" viewBox="0 0 15 15"><circle cx="7.5" cy="7.5" r="6.5" fill="none" stroke="#8a8a8a" stroke-width="1.1"/><path d="M7.5 3.5 V11.5 M3.5 7.5 H11.5" stroke="#777" stroke-width="1.3"/></svg><svg style="position:absolute;left:766px;top:664px;" width="3" height="12" viewBox="0 0 3 12"><circle cx="1.5" cy="1.5" r="0.9" fill="#aaa"/><circle cx="1.5" cy="5.5" r="0.9" fill="#aaa"/><circle cx="1.5" cy="9.5" r="0.9" fill="#aaa"/></svg><div style="position:absolute;left:777.50px;top:662.00px;width:13.00px;height:14.00px;background:#fff;border:1px solid #c6c6c6;box-sizing:border-box"></div><svg style="position:absolute;left:781px;top:665px;" width="6" height="8" viewBox="0 0 6 8"><polygon points="5,0.5 5,7.5 1,4" fill="#444"/></svg><div style="position:absolute;left:790.50px;top:662.00px;width:413.50px;height:14.00px;background:#fff;border:1px solid #c6c6c6;box-sizing:border-box"></div><div style="position:absolute;left:1204.00px;top:662.00px;width:46.00px;height:14.00px;background:#dcdcdc"></div><div style="position:absolute;left:1249.50px;top:662.00px;width:13.00px;height:14.00px;background:#fff;border:1px solid #c6c6c6;box-sizing:border-box"></div><svg style="position:absolute;left:1253px;top:665px;" width="6" height="8" viewBox="0 0 6 8"><polygon points="1,0.5 1,7.5 5,4" fill="#444"/></svg><div style="position:absolute;left:0.00px;top:678.50px;width:1280.00px;height:18.50px;background:#f3f3f3"></div><div class="t" style="left:6.80px;top:683.51px;font-size:8.5px;color:#666;font-weight:normal;transform:scaleX(0.9781);">Ввод</div><svg style="position:absolute;left:1048px;top:681px;" width="13" height="13" viewBox="0 0 13 13"><rect x="0.5" y="0.5" width="12" height="12" fill="none" stroke="#999"/><path d="M0.5 4.5 H12.5 M0.5 8.5 H12.5 M4.5 0.5 V12.5 M8.5 0.5 V12.5" stroke="#aaa"/></svg><svg style="position:absolute;left:1080px;top:681px;" width="13" height="13" viewBox="0 0 13 13"><rect x="0.5" y="0.5" width="12" height="12" fill="none" stroke="#999"/><rect x="3" y="3" width="7" height="7" fill="none" stroke="#999"/><path d="M4.5 5 H8.5 M4.5 7 H8.5" stroke="#aaa"/></svg><svg style="position:absolute;left:1112px;top:681px;" width="13" height="13" viewBox="0 0 13 13"><path d="M0.5 12.5 V0.5 H12.5 V12.5 M0.5 8.5 H12.5 M6.5 0.5 V8.5" fill="none" stroke="#999"/></svg><div style="position:absolute;left:1138.00px;top:687.50px;width:6.50px;height:1.40px;background:#555"></div><div style="position:absolute;left:1148.00px;top:688.00px;width:82.00px;height:1.00px;background:#c8c8c8"></div><div style="position:absolute;left:1188.50px;top:685.00px;width:1.00px;height:6.00px;background:#c0c0c0"></div><svg style="position:absolute;left:1232px;top:683px;" width="10" height="10" viewBox="0 0 10 10"><path d="M5 1 V9 M1 5 H9" stroke="#555" stroke-width="1.4"/></svg><div class="t" style="left:1249.00px;top:683.36px;font-size:9px;color:#c4c4c4;font-weight:normal;transform:scaleX(0.9014);">190 %</div><div style="position:absolute;left:0.00px;top:696.50px;width:1280.00px;height:23.50px;background:linear-gradient(#b6c6d6 0,#aac0d8 3px,#a7bfd9 5px,#a5bdd6)"></div><div style="position:absolute;left:0.00px;top:696.50px;width:1280.00px;height:1.20px;background:#7d8a96"></div><div style="position:absolute;left:1082.00px;top:697.70px;width:190.00px;height:22.30px;background:linear-gradient(90deg,#a7bfd9,#8e9fb2 25%,#8a9aab)"></div><div style="position:absolute;left:1271.00px;top:697.50px;width:9.00px;height:22.50px;background:#7a8898;border-left:1px solid #c0ccd8;box-sizing:border-box"></div><div style="position:absolute;left:126.60px;top:698.00px;width:26.60px;height:22.00px;background:linear-gradient(#cfdae4,#b9c8d6);border:1px solid #8a9aaa;border-radius:2px;box-sizing:border-box"></div><div style="position:absolute;left:193.80px;top:698.00px;width:30.60px;height:22.00px;background:linear-gradient(#cfdae4,#b9c8d6);border:1px solid #8a9aaa;border-radius:2px;box-sizing:border-box"></div><div style="position:absolute;left:227.60px;top:698.00px;width:30.50px;height:22.00px;background:linear-gradient(#cfdae4,#b9c8d6);border:1px solid #8a9aaa;border-radius:2px;box-sizing:border-box"></div><div style="position:absolute;left:260.80px;top:698.00px;width:25.20px;height:22.00px;background:linear-gradient(#cfdae4,#b9c8d6);border:1px solid #8a9aaa;border-radius:2px;box-sizing:border-box"></div><div style="position:absolute;left:327.00px;top:698.00px;width:30.70px;height:22.00px;background:linear-gradient(#cfdae4,#b9c8d6);border:1px solid #8a9aaa;border-radius:2px;box-sizing:border-box"></div><div style="position:absolute;left:361.00px;top:698.00px;width:24.60px;height:22.00px;background:linear-gradient(#cfdae4,#b9c8d6);border:1px solid #8a9aaa;border-radius:2px;box-sizing:border-box"></div><div style="position:absolute;left:393.60px;top:698.00px;width:25.20px;height:22.00px;background:linear-gradient(#cfdae4,#b9c8d6);border:1px solid #8a9aaa;border-radius:2px;box-sizing:border-box"></div><div style="position:absolute;left:427.30px;top:698.00px;width:26.00px;height:22.00px;background:linear-gradient(#e8ecef,#d4dce2);border:1px solid #8a9aaa;border-radius:2px;box-sizing:border-box"></div><svg style="position:absolute;left:7px;top:692px;" width="30" height="28" viewBox="0 0 30 28"><defs><radialGradient id="orb" cx="50%" cy="40%" r="60%"><stop offset="0" stop-color="#7ec8f0"/><stop offset="0.6" stop-color="#1a6bb0"/><stop offset="1" stop-color="#0b3d74"/></radialGradient></defs><circle cx="15" cy="14.5" r="13.5" fill="url(#orb)" stroke="#2a4a6a" stroke-width="0.8"/><path d="M8 9 Q11 7 14 9 V14 Q11 12 8 14 Z" fill="#f05a24"/><path d="M15 9 Q18 7 22 9 V14 Q18 12 15 14 Z" fill="#7cc242"/><path d="M8 15 Q11 13 14 15 V20 Q11 18 8 20 Z" fill="#2aa8e0"/><path d="M15 15 Q18 13 22 15 V20 Q18 18 15 20 Z" fill="#ffc20e"/></svg><svg style="position:absolute;left:46px;top:702px;" width="9" height="16" viewBox="0 0 9 16"><circle cx="1.5" cy="1.5" r="0.8" fill="#333"/><circle cx="1.5" cy="5.5" r="0.8" fill="#333"/><circle cx="1.5" cy="9.5" r="0.8" fill="#333"/><circle cx="1.5" cy="13.5" r="0.8" fill="#333"/><circle cx="4.5" cy="1.5" r="0.8" fill="#333"/><circle cx="4.5" cy="5.5" r="0.8" fill="#333"/><circle cx="4.5" cy="9.5" r="0.8" fill="#333"/><circle cx="4.5" cy="13.5" r="0.8" fill="#333"/><circle cx="7.5" cy="1.5" r="0.8" fill="#333"/><circle cx="7.5" cy="5.5" r="0.8" fill="#333"/><circle cx="7.5" cy="9.5" r="0.8" fill="#333"/><circle cx="7.5" cy="13.5" r="0.8" fill="#333"/></svg><svg style="position:absolute;left:68px;top:702px;" width="13" height="13" viewBox="0 0 13 13"><circle cx="6.5" cy="6.5" r="5.5" fill="#f5c080"/><polygon points="4.5,3.5 4.5,9.5 9.5,6.5" fill="#fff"/></svg><svg style="position:absolute;left:102px;top:703px;" width="15" height="12" viewBox="0 0 15 12"><rect x="0" y="0" width="15" height="12" fill="#6a2b3a"/><rect x="0" y="4" width="15" height="4" fill="#2b3b5a"/><rect x="0" y="9" width="15" height="3" fill="#3a7a3a"/></svg><svg style="position:absolute;left:133.36px;top:703.30px;opacity:0.9" width="13.68" height="11.40" viewBox="0 0 18 15"><rect x="1" y="3" width="16" height="11" fill="#f0e6a0" stroke="#c8b870"/><rect x="1" y="1" width="7" height="3" fill="#e0d490"/></svg><svg style="position:absolute;left:168.96px;top:701.66px;opacity:0.9" width="13.68" height="13.68" viewBox="0 0 18 18"><rect x="0.5" y="0.5" width="17" height="17" rx="2" fill="#1e90c8"/><path d="M4 14 V6 L9 3 H14 M9 8 H14 V14 H9 Z" fill="none" stroke="#fff" stroke-width="1.3"/></svg><svg style="position:absolute;left:202.04px;top:702.04px;opacity:0.9" width="12.92" height="12.92" viewBox="0 0 17 17"><circle cx="7" cy="6" r="5" fill="#e4e4e8" stroke="#aaa"/><circle cx="5" cy="5" r="1.2" fill="#d05050"/><circle cx="9" cy="4.5" r="1.2" fill="#50a050"/><path d="M10 9 L14 16" stroke="#4a6aa0" stroke-width="2.5"/></svg><svg style="position:absolute;left:235.28px;top:702.04px;opacity:0.9" width="14.44" height="12.92" viewBox="0 0 19 17"><rect x="6" y="1" width="12" height="14" fill="#3f8fd8"/><rect x="1" y="4" width="10" height="10" fill="#0a64b4"/><circle cx="6" cy="9" r="3" fill="none" stroke="#fff" stroke-width="1.5"/></svg><svg style="position:absolute;left:266.28px;top:702.04px;opacity:0.9" width="14.44" height="12.92" viewBox="0 0 19 17"><rect x="6" y="1" width="12" height="15" fill="#4a7cc8"/><rect x="1" y="4" width="10" height="10" fill="#1e4fa0"/><path d="M2.5 6 L4 12 L6 8 L8 12 L9.5 6" fill="none" stroke="#fff" stroke-width="1.2"/></svg><svg style="position:absolute;left:303.16px;top:702.04px;opacity:0.9" width="13.68" height="12.92" viewBox="0 0 18 17"><circle cx="9" cy="8.5" r="7" fill="none" stroke="#3aa0e0" stroke-width="2.5"/><path d="M4 8.5 H14" stroke="#3aa0e0" stroke-width="2"/><path d="M1 13 Q9 2 17 3" fill="none" stroke="#e8b030" stroke-width="1.3"/></svg><svg style="position:absolute;left:335.16px;top:701.66px;opacity:0.9" width="13.68" height="13.68" viewBox="0 0 18 18"><circle cx="9" cy="9" r="8" fill="#db4437"/><path d="M9 9 L16 13 A8 8 0 0 1 2 13 Z" fill="#0f9d58"/><path d="M9 9 L2 13 A8 8 0 0 1 9 1 Z" fill="#f4c20d"/><circle cx="9" cy="9" r="3.6" fill="#4285f4" stroke="#fff" stroke-width="1.3"/></svg><svg style="position:absolute;left:365.78px;top:702.04px;opacity:0.9" width="14.44" height="12.92" viewBox="0 0 19 17"><circle cx="11" cy="8.5" r="7" fill="#e86a4a"/><rect x="1" y="3.5" width="10" height="10" fill="#c43e1c"/><path d="M4 12 V6 H7 a2 2 0 0 1 0 4 H4" fill="none" stroke="#fff" stroke-width="1.3"/></svg><svg style="position:absolute;left:398.78px;top:702.04px;opacity:0.9" width="14.44" height="12.92" viewBox="0 0 19 17"><rect x="6" y="1" width="12" height="15" fill="#3da56a"/><rect x="1" y="4" width="10" height="10" fill="#1d6f3f"/><path d="M3 6 L9 12 M9 6 L3 12" stroke="#fff" stroke-width="1.4"/></svg><svg style="position:absolute;left:433.16px;top:702.04px;opacity:0.9" width="13.68" height="12.92" viewBox="0 0 18 17"><rect x="0.5" y="0.5" width="17" height="16" fill="#222" stroke="#8a7a50"/><polygon points="9,3 10.8,7.5 15,7.5 11.6,10 13,14 9,11.5 5,14 6.4,10 3,7.5 7.2,7.5" fill="#e8c860"/></svg><svg style="position:absolute;left:1102px;top:701px;" width="9" height="17" viewBox="0 0 9 17"><circle cx="1.5" cy="1.5" r="0.8" fill="#333"/><circle cx="1.5" cy="5.5" r="0.8" fill="#333"/><circle cx="1.5" cy="9.5" r="0.8" fill="#333"/><circle cx="1.5" cy="13.5" r="0.8" fill="#333"/><circle cx="4.5" cy="1.5" r="0.8" fill="#333"/><circle cx="4.5" cy="5.5" r="0.8" fill="#333"/><circle cx="4.5" cy="9.5" r="0.8" fill="#333"/><circle cx="4.5" cy="13.5" r="0.8" fill="#333"/><circle cx="7.5" cy="1.5" r="0.8" fill="#333"/><circle cx="7.5" cy="5.5" r="0.8" fill="#333"/><circle cx="7.5" cy="9.5" r="0.8" fill="#333"/><circle cx="7.5" cy="13.5" r="0.8" fill="#333"/></svg><div class="t" style="left:1116.00px;top:702.04px;font-size:11px;color:#eef2f6;font-weight:normal;transform:scaleX(0.8467);">RU</div><svg style="position:absolute;left:1135px;top:702px;" width="12" height="12" viewBox="0 0 12 12"><circle cx="6" cy="6" r="5.5" fill="#1a3aa8" stroke="#c8d4f0" stroke-width="0.8"/><text x="6" y="9.5" font-size="9" font-weight="bold" fill="#fff" text-anchor="middle" font-family="Liberation Sans">?</text></svg><svg style="position:absolute;left:1152px;top:700px;" width="8" height="16" viewBox="0 0 8 16"><rect x="1.5" y="1" width="5" height="3.5" fill="none" stroke="#eef" stroke-width="0.8"/><polygon points="2,11 6,11 4,14" fill="#eef"/></svg><svg style="position:absolute;left:1192px;top:709px;" width="7" height="5" viewBox="0 0 7 5"><polygon points="0.5,4.5 6.5,4.5 3.5,1" fill="#f4f6f8"/></svg><svg style="position:absolute;left:1209px;top:702px;" width="14" height="14" viewBox="0 0 14 14"><polygon points="1,5 4,5 8,1.5 8,12.5 4,9 1,9" fill="#f0f2f4" stroke="#888" stroke-width="0.5"/><path d="M10 4 Q12 7 10 10" fill="none" stroke="#eee" stroke-width="1"/></svg><div class="t" style="left:1240.00px;top:707.95px;font-size:10px;color:rgba(230,235,240,0.75);font-weight:normal;transform:scaleX(0.8640);">23:48</div><div class="t" style="left:1240.00px;top:700.40px;font-size:9.5px;color:rgba(255,255,255,0.5);font-weight:normal;transform:scaleX(1.1206);">Udemy</div><svg style="position:absolute;left:1225px;top:699px;" width="18" height="19" viewBox="0 0 18 19"><path d="M3 4 V11 a4 4 0 0 0 8 0 V1 M11 11 L14 17" fill="none" stroke="rgba(255,255,255,0.55)" stroke-width="2.6"/></svg>
</body></html>
